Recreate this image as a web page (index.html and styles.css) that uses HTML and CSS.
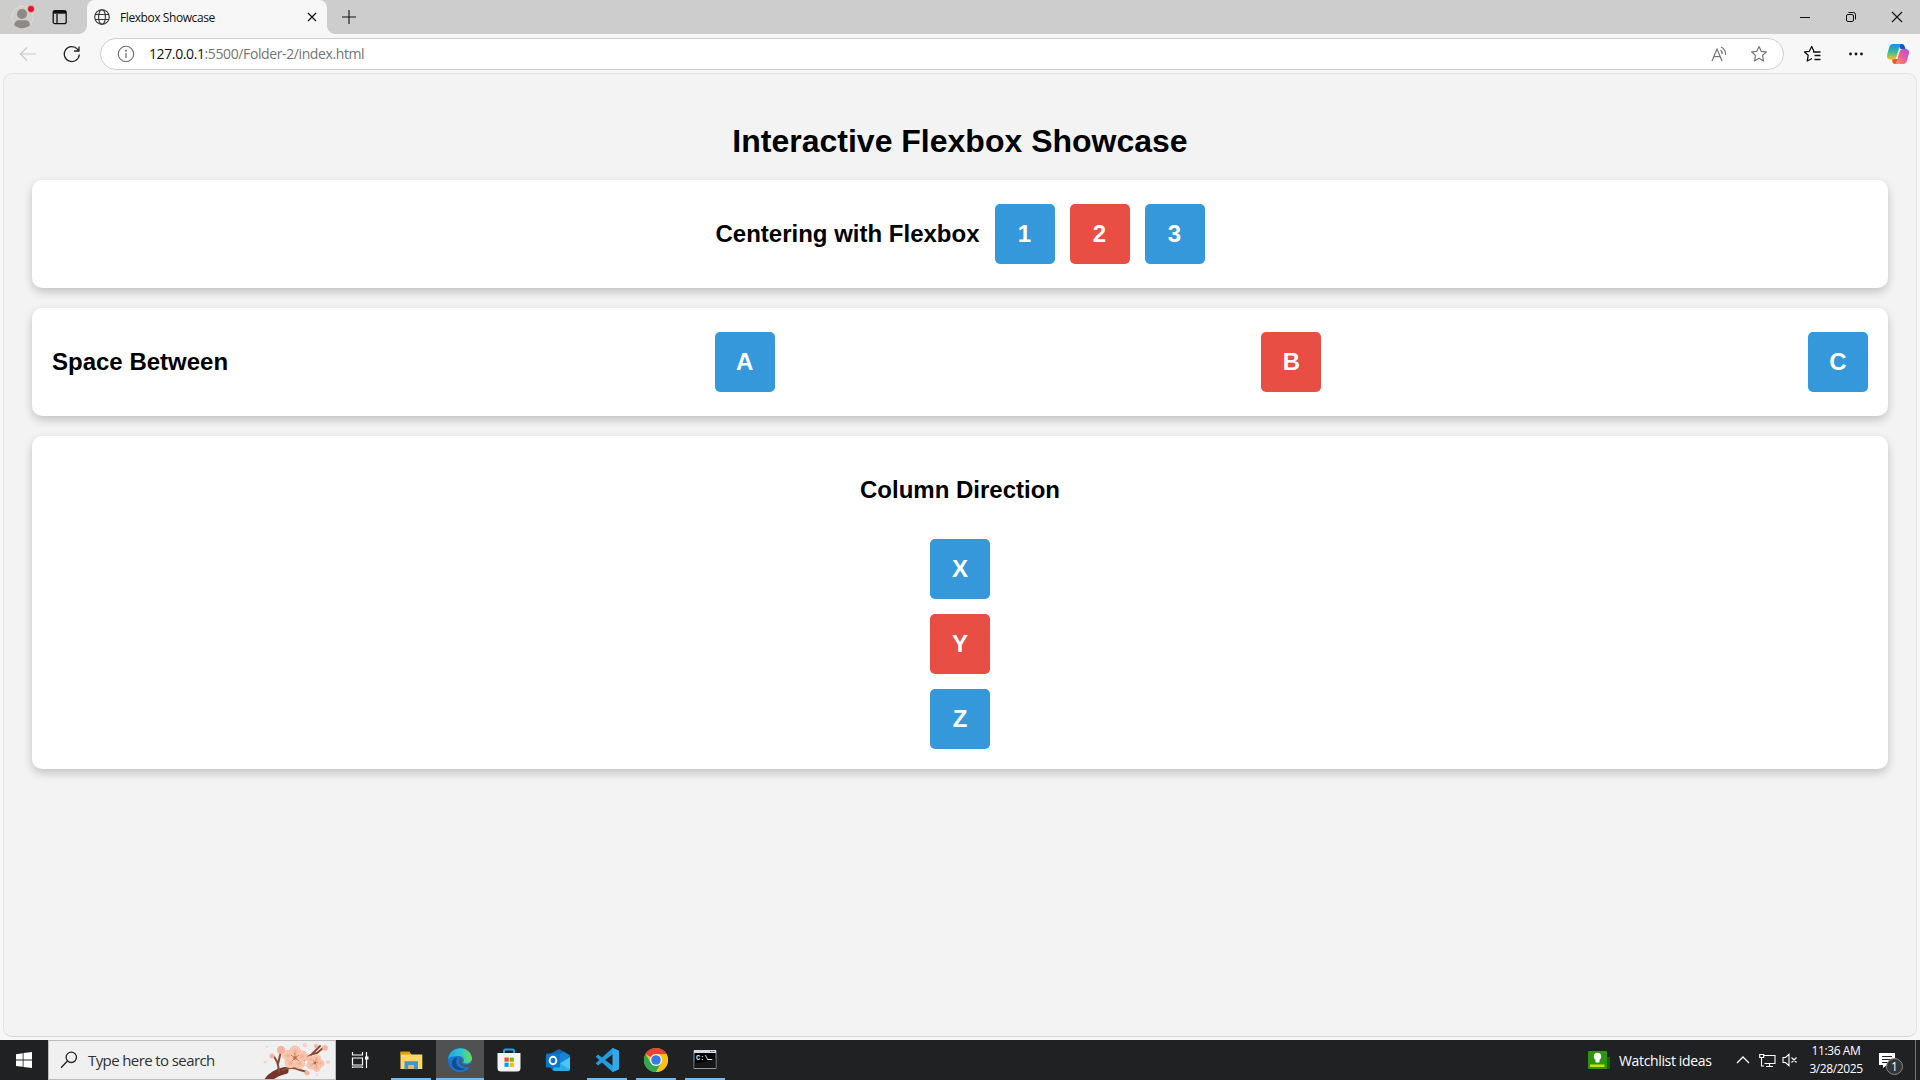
FILE: index.html
```html
<!DOCTYPE html>
<html lang="en">
<head>
<meta charset="utf-8">
<title>Flexbox Showcase</title>
<link rel="stylesheet" href="styles.css">
</head>
<body>
<header class="tabstrip">
  <svg class="avatar" width="24" height="24" viewBox="0 0 24 24"><circle cx="11.5" cy="12" r="10.7" fill="#d0cdca" stroke="#dedbd6" stroke-width="1"/><circle cx="11" cy="9" r="5" fill="#8d8985"/><path d="M3.300 20c0-3 2.500-4.700 4.500-4.700h7c2 0 4.200 1.700 4.200 4.700-4 4.200-12 4.200-15.700 0z" fill="#8d8985"/><circle cx="20" cy="4" r="3.400" fill="#e81123" stroke="#f6e5e4" stroke-width=".4"/></svg>
  <svg class="workspaces" width="16" height="16" viewBox="0 0 16 16" fill="none" stroke="#111" stroke-width="1.300"><rect x="1.200" y="1.700" width="13" height="13" rx="2"/><path d="M1.500 3.200h12.500" stroke-width="3"/><path d="M5 5v9.500"/></svg>
  <div class="tab">
    <svg width="16" height="16" viewBox="0 0 16 16" fill="none" stroke="#333" stroke-width="1.100"><circle cx="8" cy="8" r="7.300"/><ellipse cx="8" cy="8" rx="3.400" ry="7.300"/><path d="M1.200 5.500h13.600M1.200 10.500h13.600"/></svg>
    <span class="tab-title">Flexbox Showcase</span>
    <svg class="tab-close" width="10" height="10" viewBox="0 0 10 10" stroke="#111" stroke-width="1.200"><path d="M1 1l8 8M9 1l-8 8"/></svg>
  </div>
  <svg class="new-tab" width="14" height="14" viewBox="0 0 14 14" stroke="#111" stroke-width="1.100"><path d="M0 7h14M7 0v14"/></svg>
  <div class="window-controls">
    <svg width="12" height="12" viewBox="0 0 12 12" stroke="#111"><path d="M1 6.500h10"/></svg>
    <svg width="12" height="12" viewBox="0 0 12 12" fill="none" stroke="#111"><rect x="1.500" y="3.500" width="7" height="7" rx="1.500"/><path d="M3.500 1.500H8.500a2 2 0 0 1 2 2V8.500"/></svg>
    <svg width="12" height="12" viewBox="0 0 12 12" stroke="#111" stroke-width="1.100"><path d="M1 1l10 10M11 1l-10 10"/></svg>
  </div>
</header>
<nav class="toolbar">
  <svg class="back" width="18" height="16" viewBox="0 0 18 16" fill="none" stroke="#c9c9c9" stroke-width="1.200"><path d="M8 1.500L1.300 8 8 14.500M1.300 8H17"/></svg>
  <svg class="reload" width="18" height="18" viewBox="0 0 18 18" fill="none" stroke="#222" stroke-width="1.300"><path d="M16.300 9.500A7.500 7.500 0 1 1 14.500 4.200L16 6M16 1.500V6h-5"/></svg>
  <div class="address">
    <svg width="18" height="18" viewBox="0 0 18 18" fill="none" stroke="#6f6f6f" stroke-width="1.100"><circle cx="9" cy="9" r="7.700"/><path d="M9 8v5" stroke-width="1.300"/><circle cx="9" cy="5.800" r=".5"/></svg>
    <span class="url"><b>127.0.0.1</b>:5500/Folder-2/index.html</span>
    <svg class="read-aloud" width="17" height="16" viewBox="0 0 17 16" fill="none" stroke="#767676" stroke-width="1.200"><path d="M1 15L6 3l5 12M2.800 10.700h6.400M9.500 4q2 1.500 1.500 4M10 1q5 2.500 4.500 8"/></svg>
    <svg class="favorite" width="18" height="18" viewBox="0 0 18 18" fill="none" stroke="#767676" stroke-width="1.200" stroke-linejoin="round"><path d="M9 1.500l2.200 4.800 5.200.6-3.900 3.600 1 5.400L9 13.200l-4.500 2.700 1-5.400L1.600 6.900l5.200-.6z"/></svg>
  </div>
  <svg class="collections" width="18" height="18" viewBox="0 0 18 18" fill="none" stroke="#111" stroke-width="1.300" stroke-linejoin="round"><path d="M9 13.500L4.200 16l1-5.700L1.500 6.900l4.800-.6L8.700 1.500 11 6.500M10 7h7.500M11.500 10.500h6M11.500 14.500h6"/></svg>
  <svg class="more" width="16" height="16" viewBox="0 0 16 16" fill="#111"><circle cx="2.500" cy="8" r="1.400"/><circle cx="8" cy="8" r="1.400"/><circle cx="13.500" cy="8" r="1.400"/></svg>
  <svg class="copilot" width="24" height="22" viewBox="0 0 24 22"><defs><linearGradient id="cpA" x1="0" y1="0" x2="0" y2="1"><stop offset="0" stop-color="#1a8ee8"/><stop offset=".5" stop-color="#37b89b"/><stop offset="1" stop-color="#f5c51b"/></linearGradient><linearGradient id="cpB" x1="1" y1="0" x2="0" y2="1"><stop offset="0" stop-color="#a850ea"/><stop offset=".5" stop-color="#ec5d9b"/><stop offset="1" stop-color="#ff9a4d"/></linearGradient></defs><path d="M12 1h4q2 0 2.500 2l1 3h-5z" fill="#1752d0"/><path d="M6 16h6l-1 5H9q-2 0-2.500-2z" fill="#ef5430"/><path d="M7 1h8q-1 1-1.500 3l-3 10q-.7 2.500-3 2.500H4Q0 16.500 1.300 11l2-7Q4.200 1 7 1z" fill="url(#cpA)"/><path d="M16.500 6H20q4 .5 2.800 5l-2 7q-.9 3-3.500 3H9q1-.7 1.500-2.500l3-10Q14.300 6 16.500 6z" fill="url(#cpB)"/></svg>
</nav>
<main class="page">
  <h1>Interactive Flexbox Showcase</h1>
  <section class="container center"><h2>Centering with Flexbox</h2><div class="box">1</div><div class="box red">2</div><div class="box">3</div></section>
  <section class="container between"><h2>Space Between</h2><div class="box">A</div><div class="box red">B</div><div class="box">C</div></section>
  <section class="container column"><h2>Column Direction</h2><div class="box">X</div><div class="box red">Y</div><div class="box">Z</div></section>
</main>
<footer class="taskbar">
  <svg class="start" width="16" height="16" viewBox="0 0 16 16" fill="#fff"><path d="M0 2.200L6.700 1.200V7.500H0zM7.500 1.100L16 0V7.500H7.500zM0 8.400h6.700v6.400L0 13.900zM7.500 8.400H16V16l-8.500-1.100z"/></svg>
  <div class="search">
    <svg width="18" height="18" viewBox="0 0 18 18" fill="none" stroke="#222" stroke-width="1.300"><circle cx="11.300" cy="6.300" r="5.200"/><path d="M7.500 10L1 16.700"/></svg>
    <span>Type here to search</span>
    <svg class="blossom" width="70" height="38" viewBox="0 0 70 38">
      <defs>
        <radialGradient id="petal"><stop offset="0" stop-color="#f3a78f"/><stop offset=".5" stop-color="#f9c2a8"/><stop offset="1" stop-color="#fbcfba"/></radialGradient>
        <g id="flower"><g fill="url(#petal)" stroke="#eda58f" stroke-width=".5"><ellipse cy="-6.500" rx="5.500" ry="5.500"/><ellipse cx="7" cy="-2" rx="5.500" ry="5"/><ellipse cx="4.500" cy="5.500" rx="5.200" ry="5.200"/><ellipse cx="-4.500" cy="5" rx="5.500" ry="5"/><ellipse cx="-7" cy="-2.500" rx="5.500" ry="5"/></g><circle r="1.800" fill="#c86243"/><path d="M0 0V-5M0 0L4-3M0 0L4 3M0 0L-3 3M0 0L-4-3" stroke="#b86a40" stroke-width=".8"/></g>
      </defs>
      <g fill="none" stroke="#8b4a2b" stroke-linecap="round"><path d="M3 42Q9 32 22 29.500" stroke="#75352a" stroke-width="7"/><path d="M16 31Q15 18 9 14M15 23L18 10M20 29Q29 25 37 29L44 31M34 27Q44 13 54 12L60 7M49 13L57 5" stroke-width="2"/></g>
      <g fill="#f7b19f"><circle cx="18" cy="9" r="4"/><circle cx="9" cy="15" r="2.500"/><circle cx="62" cy="7" r="2.800"/><circle cx="53" cy="5" r="2"/><circle cx="44" cy="32" r="2.500"/></g><g fill="#fbcfc9"><circle cx="42" cy="4" r="2.200"/><circle cx="65" cy="21" r="2"/><circle cx="2" cy="21" r="1.500"/><circle cx="4" cy="6" r="1"/><circle cx="54" cy="34" r="1"/></g>
      <use href="#flower" x="32" y="17"/><use href="#flower" transform="translate(52 22) rotate(20) scale(.72)"/>
    </svg>
  </div>
  <div class="apps">
    <div class="app task-view"><svg width="24" height="24" viewBox="0 0 24 24" fill="none" stroke="#fff" stroke-width="1.200"><path d="M4.500 4v3h10V4M4.500 10h10v7h-10zM4.500 20v-1h10v1M18.500 4v16" /><path d="M17 8.500h3.500v3H17z" fill="#fff" stroke="none"/></svg></div>
    <div class="app open"><svg width="24" height="24" viewBox="0 0 24 24"><path d="M1.500 4.500h9l2 2h10.800v14.500H1.500z" fill="#ffd767"/><path d="M1.500 3.500h9l1.500 3h-10.500z" fill="#dfa000"/><path d="M5.500 13.200h13.500v8h-4v-4h-5.500v4h-4z" fill="#3e95d0"/><path d="M9.500 17.200H15V21H9.500z" fill="#eabc4c"/></svg></div>
    <div class="app open active"><svg width="24" height="24" viewBox="0 0 24 24"><defs><linearGradient id="edgeG" x1="0" x2="1"><stop offset="0" stop-color="#22a6e5"/><stop offset=".55" stop-color="#32c6cd"/><stop offset="1" stop-color="#69df50"/></linearGradient></defs><circle cx="12" cy="12" r="12" fill="#1876cc"/><path d="M.1 11C2-3 22-3 24 10c0 5-6 7-9 4.500 2-1.500 1-6.500-4.500-6.500C5 8 1.500 9 .1 11z" fill="url(#edgeG)"/><path d="M9.500 9.500c-4 6 1 12 8 11-6 4-13.500.5-13.500-5 0-4 3-6.500 5.500-6z" fill="#104b93"/><path d="M13 10c1 2-.5 3 .2 4.500 1.300 3 5.800 3 9.400 1.300l1.400-1v4l-2 .5C15 20 8 15 13 10z" fill="#505153"/></svg></div>
    <div class="app"><svg width="24" height="24" viewBox="0 0 24 24"><path d="M7 7V3q0-1.500 1.500-1.500h7Q17 1.500 17 3v4" fill="none" stroke="#18a8ed" stroke-width="2"/><path d="M.500 5h23v15q0 3.500-3.500 3.500h-16Q.5 23.500.5 20z" fill="#f4f4f4"/><path d="M6 5V3h2v2M16 5V3h2v2" fill="#18a8ed"/><path d="M7.500 9.500h4.200v4.200H7.500z" fill="#f05024"/><path d="M12.700 9.500h4.200v4.200h-4.200z" fill="#7ebb00"/><path d="M7.500 14.700h4.200v4.200H7.500z" fill="#00a4ef"/><path d="M12.700 14.700h4.200v4.200h-4.200z" fill="#ffb900"/></svg></div>
    <div class="app"><svg width="26" height="24" viewBox="0 0 26 24"><path d="M5 6L14 1l11 6v14l-2 2H8L5 19z" fill="#1265b8"/><path d="M12 7l7-3 6 4-10 9-7-4z" fill="#1683d7"/><path d="M8 20L25 9v11q0 3-3 3H10z" fill="#43c9f3"/><path d="M15 15l10 7q-1 1-3 1H10q-2 0-2-2z" fill="#2baee8"/><rect x="1" y="5.500" width="14" height="14" rx="1.300" fill="#0875cf"/><ellipse cx="8" cy="12.500" rx="3.300" ry="3.800" fill="none" stroke="#fff" stroke-width="2"/></svg></div>
    <div class="app open"><svg width="24" height="24" viewBox="0 0 24 24"><path d="M17.500 0L24 2.800v18.400L17.500 24 .7 8.700 3 6.500 18 18V6L3 17.500.7 15.300z" fill="#239bdf"/><path d="M17.500 0L24 2.800v18.400L17.500 24V0" fill="#32a9ec"/></svg></div>
    <div class="app open"><svg width="24" height="24" viewBox="0 0 24 24"><circle cx="12" cy="12" r="12" fill="#fbc116"/><path d="M12 12L1.600 6A12 12 0 0 1 22.400 6z" fill="#e94335"/><path d="M1.600 6A12 12 0 0 0 12 24l5.200-9L12 12l-5.200 3z" fill="#2da94f"/><path d="M12 6h10.400A12 12 0 0 1 12 24l5.200-9z" fill="#fbc116"/><circle cx="12" cy="12" r="6" fill="#fff"/><circle cx="12" cy="12" r="4.800" fill="#3779e5"/></svg></div>
    <div class="app open"><svg width="24" height="24" viewBox="0 0 24 24"><path d="M1 2.500h22v18H1z" fill="#000" stroke="#999"/><path d="M1 2h22v3H1z" fill="#d7dce2"/><path d="M17 3h1.500v1H17zM19.500 3h2v1h-2z" fill="#567"/><text x="3" y="11.500" class="prompt">C:\</text><path d="M14.500 11.500h5" stroke="#eee"/><path d="M1.500 15Q14 15 22.500 10v10h-21z" fill="#161616"/></svg></div>
  </div>
  <div class="tray">
    <svg class="news" width="22" height="20" viewBox="0 0 22 20"><path d="M16 7h6v12h-6z" fill="#11650d"/><rect y="1" width="19" height="18" rx="1" fill="#2d9414"/><path d="M2 14.500h14.500V17H2z" fill="#c1e500"/><circle cx="9.500" cy="6.500" r="3.700" fill="#fff"/><path d="M7.500 8h4v4.500h-4z" fill="#fff"/></svg>
    <span class="news-text">Watchlist ideas</span>
    <svg class="chevron" width="14" height="10" viewBox="0 0 14 10" fill="none" stroke="#fff" stroke-width="1.300"><path d="M1 8l6-6 6 6"/></svg>
    <svg class="network" width="17" height="16" viewBox="0 0 17 16" fill="none" stroke="#fff" stroke-width="1.100"><path d="M5 3.500h11v8H5.500M10.500 12v2.500M7 14.500h7M.7 2.500h4v3h-4zM2.500 5.500v8.500h2.500"/></svg>
    <svg class="sound" width="16" height="14" viewBox="0 0 16 14" fill="none" stroke="#fff" stroke-width="1.100"><path d="M1 4.500h2.500L7 1.300v11.400L3.500 9.500H1zM9.500 4.500l5 5M14.500 4.500l-5 5"/></svg>
    <div class="clock"><span class="time">11:36 AM</span><span class="date">3/28/2025</span></div>
    <div class="notice"><svg width="17" height="16" viewBox="0 0 17 16"><path d="M0 1h16v12H8l-4 3v-3H0z" fill="#fff"/><path d="M3 4.500h10M3 7.500h10M3 10.500h6" stroke="#202124"/></svg><span class="badge">1</span></div>
    <div class="show-desktop"></div>
  </div>
</footer>
</body>
</html>
```
FILE: styles.css
```css
* { box-sizing: border-box; }
body { margin: 0; width: 1920px; height: 1080px; display: flex; flex-direction: column; background: #f7f7f7; font-family: "Open Sans", "Noto Sans", sans-serif; overflow: hidden; }
svg { display: block; flex: none; }
span { white-space: nowrap; }

.tabstrip { height: 34px; display: flex; align-items: center; background: #cdcdcd; }
.avatar { margin-left: 11px; }
.workspaces { margin-left: 17px; }
.tab { width: 240px; height: 34px; margin-left: 19px; padding: 0 10px 0 7px; display: flex; align-items: center; background: #f7f7f7; border-radius: 8px 8px 0 0; position: relative; }
.tab::before, .tab::after { content: ""; position: absolute; bottom: 0; width: 8px; height: 8px; }
.tab::before { left: -8px; background: radial-gradient(circle at 0 0, transparent 7.5px, #f7f7f7 8px); }
.tab::after { right: -8px; background: radial-gradient(circle at 100% 0, transparent 7.5px, #f7f7f7 8px); }
.tab-title { margin-left: 10px; font-size: 12px; letter-spacing: -.42px; color: #111; }
.tab-close { margin-left: auto; }
.new-tab { margin-left: 15px; }
.window-controls { margin-left: auto; display: flex; gap: 34px; padding-right: 17px; }

.toolbar { height: 39px; display: flex; align-items: center; }
.back { margin-left: 19px; }
.reload { margin-left: 26px; }
.address { width: 1684px; height: 32px; margin-left: 19px; padding: 0 15px 0 16px; display: flex; align-items: center; background: #fff; border: 1px solid #cfcfcf; border-radius: 16px; }
.url { margin-left: 14px; font-size: 14px; letter-spacing: -.39px; color: #747474; }
.url b { font-weight: 400; color: #111; }
.read-aloud { margin-left: auto; }
.favorite { margin-left: 22px; }
.collections { margin-left: 19px; }
.more { margin-left: 27px; }
.copilot { margin-left: 22px; }

.page { height: 964px; margin: 0 3px 3px; padding: 28px; background: #f3f3f3; border: 1px solid #e4e4e4; border-bottom-color: #d8d8d8; border-radius: 9px; font-family: Arial, "Liberation Sans", sans-serif; color: #000; text-align: center; }
h1 { margin: 21px 0 20px; font-size: 32px; line-height: 37px; }
h2 { margin: 20px 0; font-size: 24px; line-height: 28px; }
.container { display: flex; align-items: center; gap: 15px; margin-bottom: 20px; padding: 20px; background: #fff; border-radius: 10px; box-shadow: 0 4px 10px rgba(0, 0, 0, .2); }
.center { justify-content: center; }
.between { justify-content: space-between; }
.column { flex-direction: column; }
.box { flex: none; width: 60px; height: 60px; display: flex; align-items: center; justify-content: center; background: #3498db; border-radius: 5px; color: #fff; font-size: 24px; font-weight: bold; }
.red { background: #e84e43; }

.taskbar { height: 40px; display: flex; align-items: center; background: #1f2123; color: #fff; }
.start { margin: 0 16px; }
.search { width: 288px; height: 40px; padding-left: 11px; display: flex; align-items: center; background: #f0f0f0; border: 1px solid #bcbcbc; color: #303030; }
.search span { margin-left: 10px; font-size: 15px; letter-spacing: -.6px; }
.blossom { margin: 0 2px 0 auto; }
.apps { display: flex; gap: 1px; margin-left: 2px; }
.app { width: 48px; height: 40px; display: flex; flex-direction: column; align-items: center; padding-top: 8px; }
.task-view { padding-right: 4px; }
.open::after { content: ""; width: 40px; height: 2px; margin-top: 6px; background: #76b9ed; }
.active { background: #505153; }
.active::after { width: 48px; }
.prompt { font: bold 7px "Liberation Mono", monospace; fill: #eee; }
.tray { height: 40px; margin-left: auto; display: flex; align-items: center; }
.news-text { width: 92px; margin-left: 9px; font-size: 14px; letter-spacing: -.35px; }
.chevron { margin-left: 25px; }
.network { margin-left: 9px; }
.sound { margin-left: 6px; }
.clock { width: 56px; margin-left: 10px; display: flex; flex-direction: column; align-items: center; font-size: 12px; line-height: 18px; letter-spacing: -.4px; }
.notice { position: relative; width: 25px; margin-left: 15px; }
.badge { position: absolute; left: 7px; top: 6px; width: 17px; height: 17px; border: 1px solid #888; border-radius: 50%; background: #343638; font-size: 12px; line-height: 15px; text-align: center; }
.show-desktop { width: 5px; height: 40px; margin-left: 11px; border-left: 1px solid #777; }
```
